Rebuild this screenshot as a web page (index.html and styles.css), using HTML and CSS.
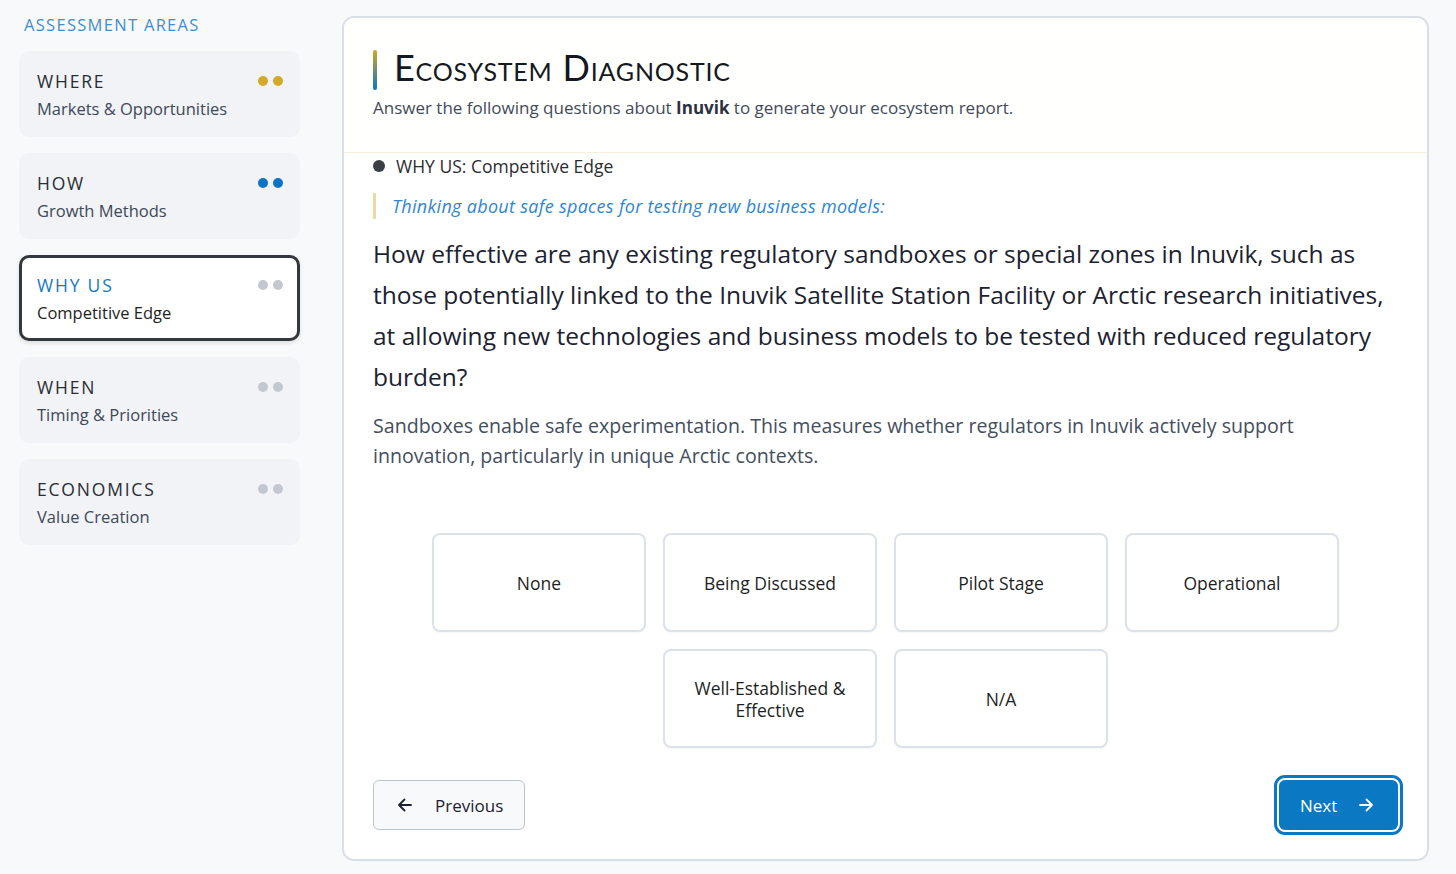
FILE: index.html
```html
<!DOCTYPE html>
<html lang="en">
<head>
<meta charset="utf-8">
<title>Ecosystem Diagnostic</title>
<link rel="stylesheet" href="styles.css">
</head>
<body>
<div class="layout">
  <aside class="sidebar">
    <div class="sidebar-title">Assessment Areas</div>
    <div class="area">
      <div class="area-text"><div class="area-name">Where</div><div class="area-sub">Markets &amp; Opportunities</div></div>
      <div class="dots gold"><span></span><span></span></div>
    </div>
    <div class="area">
      <div class="area-text"><div class="area-name">How</div><div class="area-sub">Growth Methods</div></div>
      <div class="dots blue"><span></span><span></span></div>
    </div>
    <div class="area active">
      <div class="area-text"><div class="area-name">Why Us</div><div class="area-sub">Competitive Edge</div></div>
      <div class="dots grey"><span></span><span></span></div>
    </div>
    <div class="area">
      <div class="area-text"><div class="area-name">When</div><div class="area-sub">Timing &amp; Priorities</div></div>
      <div class="dots grey"><span></span><span></span></div>
    </div>
    <div class="area">
      <div class="area-text"><div class="area-name">Economics</div><div class="area-sub">Value Creation</div></div>
      <div class="dots grey"><span></span><span></span></div>
    </div>
  </aside>
  <main class="panel">
    <header class="panel-head">
      <h1 class="title"><span class="accent"></span><span class="title-text">Ecosystem Diagnostic</span></h1>
      <p class="lead">Answer the following questions about <b>Inuvik</b> to generate your ecosystem report.</p>
    </header>
    <section class="panel-body">
      <div class="section-tag"><span class="bullet"></span>WHY US: Competitive Edge</div>
      <div class="context">Thinking about safe spaces for testing new business models:</div>
      <h2 class="question">How effective are any existing regulatory sandboxes or special zones in Inuvik, such as those potentially linked to the Inuvik Satellite Station Facility or Arctic research initiatives, at allowing new technologies and business models to be tested with reduced regulatory burden?</h2>
      <p class="explain">Sandboxes enable safe experimentation. This measures whether regulators in Inuvik actively support innovation, particularly in unique Arctic contexts.</p>
      <div class="options">
        <button class="option">None</button>
        <button class="option">Being Discussed</button>
        <button class="option">Pilot Stage</button>
        <button class="option">Operational</button>
        <button class="option">Well-Established &amp;<br>Effective</button>
        <button class="option">N/A</button>
      </div>
      <div class="nav">
        <button class="btn prev"><svg width="16" height="16" viewBox="0 0 16 16" fill="none" stroke="currentColor" stroke-width="1.8" stroke-linecap="round" stroke-linejoin="round"><path d="M14 8H2M7.5 2.5L2 8l5.5 5.5"/></svg><span>Previous</span></button>
        <button class="btn next"><span>Next</span><svg width="16" height="16" viewBox="0 0 16 16" fill="none" stroke="currentColor" stroke-width="1.8" stroke-linecap="round" stroke-linejoin="round"><path d="M2 8h12M8.5 2.5L14 8l-5.5 5.5"/></svg></button>
      </div>
    </section>
  </main>
</div>
</body>
</html>
```
FILE: styles.css
```css
* { box-sizing: border-box; }
html, body { margin: 0; height: 100%; }
body {
  background: #f8f9fa;
  font-family: "Open Sans", Lato, sans-serif;
  color: #222;
}
.layout {
  display: grid;
  grid-template-columns: 281px 1fr;
  column-gap: 42px;
  padding: 16px 27px 13px 19px;
  height: 874px;
}
.sidebar { display: flex; flex-direction: column; gap: 16px; margin-top: -1px; }
.sidebar-title {
  text-transform: uppercase;
  color: #3d8fd3;
  font-size: 16.5px;
  letter-spacing: 1.3px;
  line-height: 20px;
  padding-left: 5px;
}
.area {
  display: flex;
  justify-content: space-between;
  align-items: flex-start;
  background: #f1f3f6;
  border: 3px solid #f1f3f6;
  border-radius: 10px;
  padding: 16px 14px 14px 15px;
  height: 86px;
}
.area.active {
  background: #fff;
  border-color: #34383e;
  box-shadow: 0 2px 4px rgba(0,0,0,0.12);
}
.area-name {
  text-transform: uppercase;
  font-size: 17.5px;
  letter-spacing: 1.8px;
  color: #2a2d33;
  line-height: 22px;
}
.area.active .area-name { color: #1777c4; }
.area-sub {
  font-size: 16.5px;
  color: #3e4858;
  line-height: 22px;
  margin-top: 6px;
}
.area.active .area-sub { color: #1e1e1e; }
.dots { display: flex; gap: 5px; margin-top: 6px; }
.dots span { width: 10px; height: 10px; border-radius: 50%; background: #c3c8d0; }
.dots.gold span { background: #d4a928; }
.dots.blue span { background: #0c74c4; }
.panel {
  background: #fff;
  border: 2px solid #dadfe7;
  border-radius: 12px;
  display: flex;
  flex-direction: column;
  overflow: hidden;
}
.panel-head {
  padding: 29px 29px 0 29px;
  height: 135px;
  border-bottom: 1px solid #f6f0dc;
  background: #fffffe;
}
.title {
  margin: 0;
  display: flex;
  align-items: center;
  gap: 17px;
  font-family: Lato, sans-serif;
  font-weight: 400;
  font-variant: small-caps;
  font-size: 36px;
  line-height: 40px;
  letter-spacing: 0.8px;
  color: #141820;
}
.title-text { padding-bottom: 6px; }
.accent {
  width: 4px;
  height: 40px;
  border-radius: 2px;
  background: linear-gradient(#d4aa20, #0a78c2);
}
.lead {
  margin: 4px 0 0;
  font-size: 17px;
  color: #3f4a5b;
  line-height: 22px;
}
.lead b { color: #2a3140; font-weight: 700; }
.panel-body {
  flex: 1;
  display: flex;
  flex-direction: column;
  padding: 2px 29px 29px 29px;
}
.section-tag {
  display: flex;
  align-items: center;
  gap: 11px;
  font-size: 17.5px;
  line-height: 22px;
  color: #2b2d31;
}
.bullet { width: 12px; height: 12px; border-radius: 50%; background: #3a3e45; }
.context {
  margin-top: 16px;
  border-left: 3px solid #eed9a2;
  padding: 2px 0 2px 16px;
  font-style: italic;
  font-size: 18px;
  letter-spacing: 0.3px;
  line-height: 22px;
  color: #2f86d2;
}
.question {
  margin: 14px 0 0;
  font-weight: 400;
  font-size: 24.5px;
  line-height: 41px;
  color: #1c2230;
}
.explain {
  margin: 14px 0 0;
  max-width: 960px;
  font-size: 19.6px;
  line-height: 30px;
  color: #434e5e;
}
.options {
  margin: 62px auto 0;
  width: 907px;
  display: flex;
  flex-wrap: wrap;
  justify-content: center;
  gap: 17px;
}
.option {
  width: 214px;
  height: 99px;
  background: #fff;
  border: 2px solid #dde2ea;
  border-radius: 8px;
  font-family: inherit;
  font-size: 17.5px;
  line-height: 22px;
  color: #1d1f24;
  box-shadow: 0 1px 2px rgba(0,0,0,0.04);
}
.nav {
  margin-top: auto;
  display: flex;
  justify-content: space-between;
  align-items: center;
}
.btn {
  display: flex;
  align-items: center;
  font-family: inherit;
  font-size: 17px;
  border-radius: 6px;
  height: 50px;
}
.prev {
  width: 152px;
  background: #f7f9fb;
  border: 1px solid #b8c5d7;
  color: #1c2230;
  padding: 0 0 0 23px;
  gap: 22px;
}
.next {
  width: 119px;
  background: #0a78c2;
  border: none;
  color: #fff;
  padding: 0 0 0 21px;
  gap: 21px;
  outline: 3px solid #0a78c2;
  outline-offset: 2px;
  box-shadow: 0 0 0 2px #fff;
}
```
